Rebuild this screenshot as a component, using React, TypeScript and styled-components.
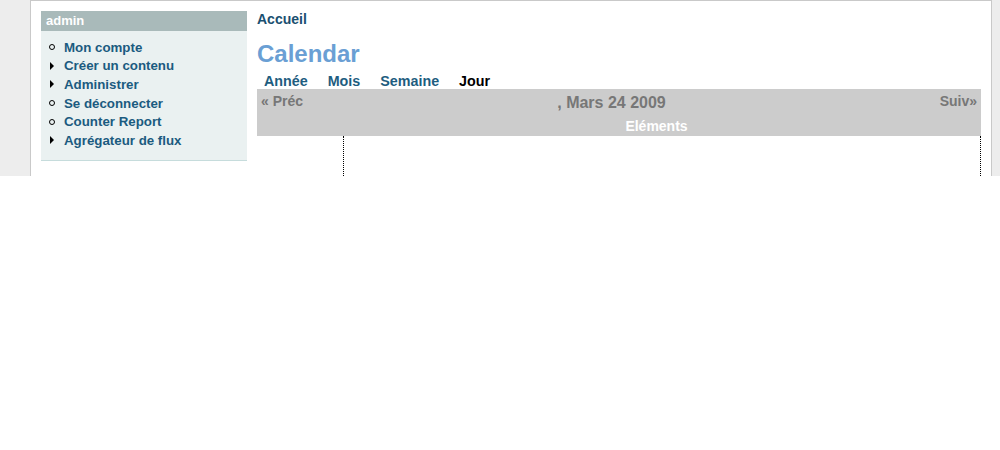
import React from "react";
import styled, { createGlobalStyle } from "styled-components";

const Global = createGlobalStyle`
  html, body { margin: 0; padding: 0; background: #fff; }
  body { font-family: "Liberation Sans", Arial, sans-serif; }
`;

const Wrapper = styled.div`
  height: 176px;
  overflow: hidden;
  background: #ededed;
`;

const Page = styled.div`
  margin: 0 8px 0 30px;
  min-height: 400px;
  background: #fff;
  border: 1px solid #c9c9c9;
  border-bottom: none;
  padding: 10px 10px 0 10px;
  display: flex;
  gap: 10px;
  align-items: flex-start;
`;

const Sidebar = styled.div`
  width: 206px;
  flex: none;
`;

const BlockTitle = styled.div`
  background: #a9baba;
  color: #fff;
  font-weight: bold;
  font-size: 13px;
  line-height: 20px;
  padding-left: 5px;
`;

const BlockBody = styled.ul`
  list-style: none;
  margin: 0;
  padding: 7px 0 10px 7px;
  background: #eaf1f1;
  border-bottom: 1px solid #c6dcdc;
`;

const Item = styled.li`
  display: flex;
  align-items: center;
  height: 18.6px;
  font-size: 13.3px;
  font-weight: bold;
  color: #1b5b80;
`;

const MarkerBox = styled.span`
  width: 16px;
  flex: none;
  display: flex;
  align-items: center;
  justify-content: flex-start;
`;

const Circle = styled.span`
  width: 4px;
  height: 4px;
  margin-left: 1px;
  border: 1px solid #000;
  border-radius: 50%;
`;

const Triangle = styled.span`
  width: 0;
  height: 0;
  margin-left: 2px;
  border-top: 4px solid transparent;
  border-bottom: 4px solid transparent;
  border-left: 4px solid #000;
`;

const Main = styled.div`
  flex: 1;
  min-width: 0;
`;

const Breadcrumb = styled.div`
  font-size: 14px;
  font-weight: bold;
  line-height: 16px;
  color: #1a4f70;
`;

const Title = styled.h1`
  margin: 13px 0 0;
  font-size: 24px;
  line-height: 28px;
  font-weight: bold;
  color: #6a9fd4;
`;

const Tabs = styled.div`
  display: flex;
  gap: 20px;
  padding: 5px 0 0 7px;
`;

const Tab = styled.span<{ $active?: boolean }>`
  font-size: 14.3px;
  font-weight: bold;
  line-height: 16px;
  color: ${(p) => (p.$active ? "#000" : "#1e5d80")};
`;

const NavRow = styled.div`
  display: grid;
  grid-template-columns: 1fr auto 1fr;
  height: 28px;
  padding: 4px 4px 0;
  background: #cccccc;
  box-sizing: border-box;
  color: #777;
  font-weight: bold;
`;

const Prev = styled.span`
  font-size: 14px;
  line-height: 16px;
`;

const DateLabel = styled.span`
  font-size: 16px;
  line-height: 20px;
  margin-right: 15px;
`;

const Next = styled.span`
  font-size: 14px;
  line-height: 16px;
  text-align: right;
`;

const HeadRow = styled.div`
  display: grid;
  grid-template-columns: 87px 1fr;
  height: 19px;
  background: #cccccc;
`;

const HeadCell = styled.div`
  color: #fff;
  font-size: 14px;
  font-weight: bold;
  line-height: 18px;
  text-align: center;
  padding-right: 12px;
`;

const BodyRow = styled.div`
  display: grid;
  grid-template-columns: 87px 1fr;
  height: 300px;
`;

const BodyCell = styled.div`
  border-right: 1px dotted #000;
`;

const items: { label: string; kind: "circle" | "tri" }[] = [
  { label: "Mon compte", kind: "circle" },
  { label: "Créer un contenu", kind: "tri" },
  { label: "Administrer", kind: "tri" },
  { label: "Se déconnecter", kind: "circle" },
  { label: "Counter Report", kind: "circle" },
  { label: "Agrégateur de flux", kind: "tri" },
];

export default function App() {
  return (
    <>
      <Global />
      <Wrapper>
        <Page>
          <Sidebar>
            <BlockTitle>admin</BlockTitle>
            <BlockBody>
              {items.map((it) => (
                <Item key={it.label}>
                  <MarkerBox>{it.kind === "circle" ? <Circle /> : <Triangle />}</MarkerBox>
                  {it.label}
                </Item>
              ))}
            </BlockBody>
          </Sidebar>
          <Main>
            <Breadcrumb>Accueil</Breadcrumb>
            <Title>Calendar</Title>
            <Tabs>
              <Tab>Année</Tab>
              <Tab>Mois</Tab>
              <Tab>Semaine</Tab>
              <Tab $active>Jour</Tab>
            </Tabs>
            <NavRow>
              <Prev>« Préc</Prev>
              <DateLabel>, Mars 24 2009</DateLabel>
              <Next>Suiv»</Next>
            </NavRow>
            <HeadRow>
              <div />
              <HeadCell>Eléments</HeadCell>
            </HeadRow>
            <BodyRow>
              <BodyCell />
              <BodyCell />
            </BodyRow>
          </Main>
        </Page>
      </Wrapper>
    </>
  );
}
